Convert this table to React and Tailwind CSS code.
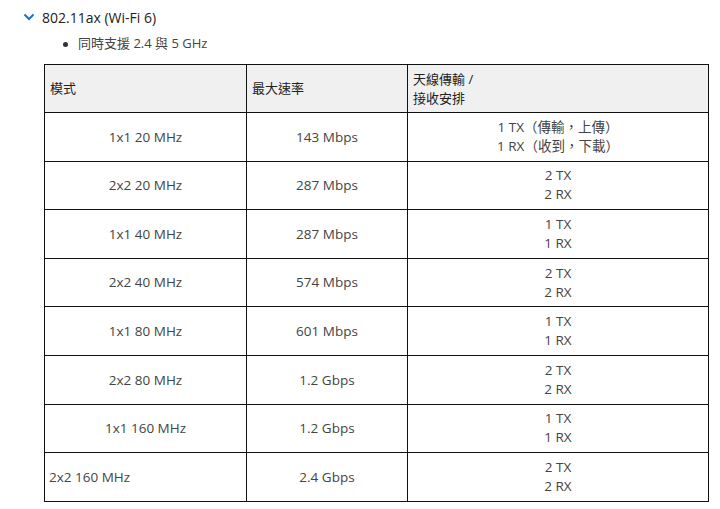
import React from 'react';

const rows = [
    { mode: '1x1 20 MHz', rate: '143 Mbps', tx: '1 TX（傳輸，上傳）', rx: '1 RX（收到，下載）' },
    { mode: '2x2 20 MHz', rate: '287 Mbps', tx: '2 TX', rx: '2 RX' },
    { mode: '1x1 40 MHz', rate: '287 Mbps', tx: '1 TX', rx: '1 RX' },
    { mode: '2x2 40 MHz', rate: '574 Mbps', tx: '2 TX', rx: '2 RX' },
    { mode: '1x1 80 MHz', rate: '601 Mbps', tx: '1 TX', rx: '1 RX' },
    { mode: '2x2 80 MHz', rate: '1.2 Gbps', tx: '2 TX', rx: '2 RX' },
    { mode: '1x1 160 MHz', rate: '1.2 Gbps', tx: '1 TX', rx: '1 RX' },
    { mode: '2x2 160 MHz', rate: '2.4 Gbps', tx: '2 TX', rx: '2 RX', left: true },
];

export default function App() {
    return (
        <div className="w-[720px] h-[509px] overflow-hidden bg-white text-[#444] text-[13.5px] font-['Open_Sans','Noto_Sans_CJK_TC',sans-serif]">
            {/* Section heading */}
            <div className="flex items-center h-[34px] pl-[23px]">
                <svg width="12" height="8" viewBox="0 0 12 8" className="mr-[7px]">
                    <path d="M1.5 1.5 L6 6 L10.5 1.5" fill="none" stroke="#1a73c8" strokeWidth="2" />
                </svg>
                <span className="text-[14px] text-[#222]">802.11ax (Wi-Fi 6)</span>
            </div>

            <ul className="pl-[63px] h-[20px] mb-[10px] flex items-center">
                <li className="flex items-center">
                    <span className="w-[5px] h-[5px] rounded-full bg-[#333] mr-[10px]" />
                    <span className="text-[13px]">同時支援 2.4 與 5 GHz</span>
                </li>
            </ul>

            {/* Table */}
            <table className="ml-[44px] w-[665px] border-collapse border border-[#555] table-fixed">
                <colgroup>
                    <col className="w-[202px]" />
                    <col className="w-[161px]" />
                    <col />
                </colgroup>
                <thead>
                    <tr className="h-[48px] bg-[#f0f0f0] text-[#222] text-[13px]">
                        <th className="border border-[#111] text-left font-normal px-[5px]">模式</th>
                        <th className="border border-[#111] text-left font-normal px-[5px]">最大速率</th>
                        <th className="border border-[#111] text-left font-normal px-[5px] leading-[19px]">
                            天線傳輸 /<br />接收安排
                        </th>
                    </tr>
                </thead>
                <tbody>
                    {rows.map((r) => (
                        <tr key={r.mode} className="h-[48.6px]">
                            <td className={`border border-[#111] px-[4px] ${r.left ? 'text-left' : 'text-center'}`}>{r.mode}</td>
                            <td className="border border-[#111] text-center">{r.rate}</td>
                            <td className="border border-[#111] text-center leading-[19px]">
                                {r.tx}<br />{r.rx}
                            </td>
                        </tr>
                    ))}
                </tbody>
            </table>
        </div>
    );
}
